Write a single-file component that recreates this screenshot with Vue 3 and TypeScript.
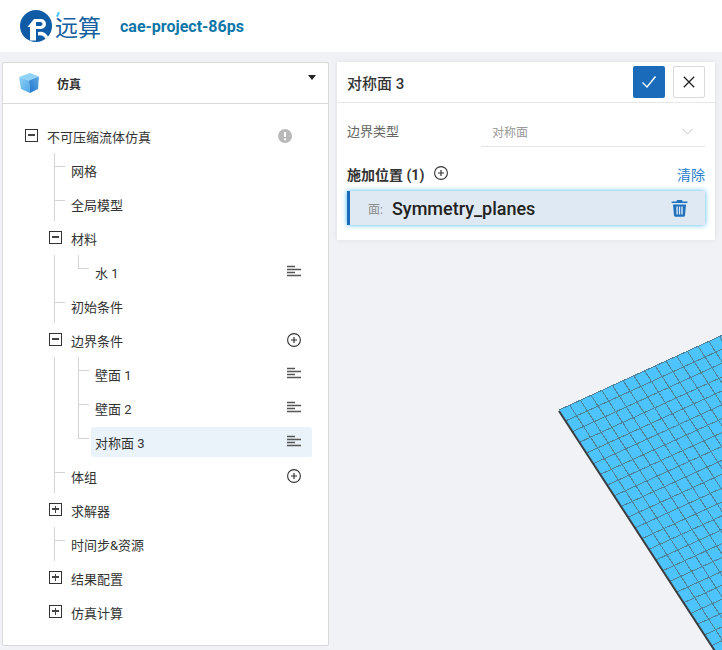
<script setup lang="ts">
import { computed } from "vue";

interface TreeRow
{
    label: string,
    level: number,
    toggle?: "open" | "closed",
    action?: "list" | "add" | "warn",
    stem?: boolean,
    branch?: "mid" | "last",
    active?: boolean,
}

const rows: TreeRow[] = [
    { label: "不可压缩流体仿真", level: 0, toggle: "open", action: "warn" },
    { label: "网格", level: 1, stem: true },
    { label: "全局模型", level: 1, stem: true },
    { label: "材料", level: 1, toggle: "open" },
    { label: "水 1", level: 2, stem: true, branch: "last", action: "list" },
    { label: "初始条件", level: 1, stem: true },
    { label: "边界条件", level: 1, toggle: "open", action: "add" },
    { label: "壁面 1", level: 2, stem: true, branch: "mid", action: "list" },
    { label: "壁面 2", level: 2, stem: true, branch: "mid", action: "list" },
    { label: "对称面 3", level: 2, stem: true, branch: "last", action: "list", active: true },
    { label: "体组", level: 1, stem: true, action: "add" },
    { label: "求解器", level: 1, toggle: "closed" },
    { label: "时间步&资源", level: 1, stem: true },
    { label: "结果配置", level: 1, toggle: "closed" },
    { label: "仿真计算", level: 1, toggle: "closed" },
];

// mesh plate, one corner plus one cell step along each edge
const corner = { x: 559, y: 410 };
const stepU = { x: 10.7, y: -4.9 };
const stepV = { x: 6.95, y: 10.7 };
const cells = 40;

const plate = computed((): string =>
{
    const far = (s: { x: number, y: number }) => `${corner.x + s.x * cells},${corner.y + s.y * cells}`;
    const both = `${corner.x + (stepU.x + stepV.x) * cells},${corner.y + (stepU.y + stepV.y) * cells}`;
    return `${corner.x},${corner.y} ${far(stepU)} ${both} ${far(stepV)}`;
});

const gridPath = computed((): string =>
{
    let d = "";
    for (let i = 0; i < cells; i++)
    {
        const ax = corner.x + stepU.x * i, ay = corner.y + stepU.y * i;
        if (i > 0) d += `M${ax} ${ay}L${ax + stepV.x * cells} ${ay + stepV.y * cells}`;
        const bx = corner.x + stepV.x * i, by = corner.y + stepV.y * i;
        d += `M${bx} ${by}L${bx + stepU.x * cells} ${by + stepU.y * cells}`;
    }
    return d;
});

const edgeEnd = { x: corner.x + stepV.x * cells, y: corner.y + stepV.y * cells };
</script>

<template>
    <div class="page">
        <header class="topbar">
            <svg class="logo-mark" width="34" height="34" viewBox="0 0 34 34">
                <circle cx="17" cy="17" r="16" fill="#0f5ba6" />
                <path d="M11 31.5 V18 H8.5 L15 10 H22 A5 5 0 0 1 22 20 H17 V31.5 Z" fill="#fff" />
                <path d="M17 13 H21.5 A2 2 0 0 1 21.5 17 H17 Z" fill="#0f5ba6" />
                <path d="M19 23 A9 9 0 0 1 29 27.5 L26.5 30 A6 6 0 0 0 19 26.5 Z" fill="#fff" />
            </svg>
            <span class="logo-text">远算</span>
            <span class="project">cae-project-86ps</span>
        </header>

        <main class="workspace">
            <svg class="mesh" width="722" height="650" viewBox="0 0 722 650">
                <polygon :points="plate" fill="#4dc4fd" />
                <path :d="gridPath" stroke="#4f8199" stroke-width="1" fill="none" shape-rendering="crispEdges" />
                <path :d="`M${corner.x} ${corner.y + 1}L${edgeEnd.x} ${edgeEnd.y + 1}`" stroke="#3a3d40" stroke-width="2" fill="none" />
            </svg>

            <section class="tree-panel">
                <div class="tree-head">
                    <svg class="cube" width="22" height="22" viewBox="0 0 22 22">
                        <defs>
                            <linearGradient id="cube-right" x1="0" y1="1" x2="1" y2="0">
                                <stop offset="0" stop-color="#1f74cc" />
                                <stop offset="1" stop-color="#5fa9e2" />
                            </linearGradient>
                            <linearGradient id="cube-left" x1="0" y1="0" x2="1" y2="1">
                                <stop offset="0" stop-color="#8ed2f6" />
                                <stop offset="1" stop-color="#4ba6e6" />
                            </linearGradient>
                        </defs>
                        <polygon points="12,1 21,4.5 11,8.5 1,5" fill="#8fd4f7" />
                        <polygon points="1,5 11,8.5 12,21 3,17" fill="url(#cube-left)" />
                        <polygon points="11,8.5 21,4.5 20,17 12,21" fill="url(#cube-right)" />
                    </svg>
                    <span class="tree-title">仿真</span>
                    <span class="caret"></span>
                </div>

                <ul class="tree">
                    <li
                        v-for="row in rows"
                        :key="row.label"
                        class="row"
                        :class="[`level-${row.level}`, { stem: row.stem }]"
                    >
                        <span v-if="row.branch" class="branch" :class="row.branch"></span>
                        <div class="row-inner" :class="{ active: row.active }">
                            <span v-if="row.toggle" class="toggle" :class="row.toggle"></span>
                            <span class="label">{{ row.label }}</span>
                            <svg v-if="row.action === 'list'" class="action" width="14" height="14" viewBox="0 0 14 14">
                                <path d="M0 1.5H8M0 4.5H14M0 7.5H8M0 10.5H14" stroke="#555" stroke-width="1.3" />
                            </svg>
                            <svg v-else-if="row.action === 'add'" class="action" width="14" height="14" viewBox="0 0 14 14">
                                <circle cx="7" cy="7" r="6.4" fill="none" stroke="#333" stroke-width="1.1" />
                                <path d="M7 4V10M4 7H10" stroke="#333" stroke-width="1.2" />
                            </svg>
                            <svg v-else-if="row.action === 'warn'" class="action warn" width="14" height="14" viewBox="0 0 14 14">
                                <circle cx="7" cy="7" r="7" fill="#b9b9b9" />
                                <path d="M7 3V8" stroke="#fff" stroke-width="2" />
                                <circle cx="7" cy="10.4" r="1.1" fill="#fff" />
                            </svg>
                        </div>
                    </li>
                </ul>
            </section>

            <section class="detail-panel">
                <div class="detail-head">
                    <span class="detail-title">对称面 3</span>
                    <button class="btn primary" type="button">
                        <svg width="16" height="14" viewBox="0 0 16 14">
                            <path d="M1.5 7.5L6 12L14.5 1.5" fill="none" stroke="#fff" stroke-width="1.4" />
                        </svg>
                    </button>
                    <button class="btn plain" type="button">
                        <svg width="12" height="12" viewBox="0 0 12 12">
                            <path d="M0.8 0.8L11.2 11.2M11.2 0.8L0.8 11.2" stroke="#222" stroke-width="1.3" />
                        </svg>
                    </button>
                </div>

                <div class="detail-body">
                    <div class="field">
                        <span class="field-label">边界类型</span>
                        <div class="select">
                            <span>对称面</span>
                            <svg width="11" height="7" viewBox="0 0 11 7">
                                <path d="M0.5 0.8L5.5 6L10.5 0.8" fill="none" stroke="#c4c4c4" stroke-width="1" />
                            </svg>
                        </div>
                    </div>

                    <div class="apply-head">
                        <span class="apply-title">施加位置 (1)</span>
                        <svg class="apply-add" width="14" height="14" viewBox="0 0 14 14">
                            <circle cx="7" cy="7" r="6.4" fill="none" stroke="#333" stroke-width="1.1" />
                            <path d="M7 4V10M4 7H10" stroke="#333" stroke-width="1.2" />
                        </svg>
                        <a class="clear">清除</a>
                    </div>

                    <div class="selected">
                        <span class="selected-kind">面:</span>
                        <span class="selected-name">Symmetry_planes</span>
                        <svg width="17" height="18" viewBox="0 0 17 18">
                            <path d="M6 1H11L11.6 2.4H16.4V4H0.6V2.4H5.4Z" fill="#1f70bd" />
                            <path d="M2 5.4H15L14 16.6A1.3 1.3 0 0 1 12.8 17.8H4.2A1.3 1.3 0 0 1 3 16.6ZM5.4 7.4V15.6H6.8V7.4ZM7.9 7.4V15.6H9.2V7.4ZM10.3 7.4V15.6H11.7V7.4Z" fill="#1f70bd" fill-rule="evenodd" />
                        </svg>
                    </div>
                </div>
            </section>
        </main>
    </div>
</template>

<style>
html, body
{
    margin: 0;
    overflow: hidden;
}
</style>

<style scoped>
.page
{
    width: 722px;
    height: 650px;
    display: flex;
    flex-direction: column;
    background-color: #f0f2f5;
    font-family: Roboto, "Noto Sans CJK SC", sans-serif;
    color: #333;
    overflow: hidden;
    position: relative;
}

.topbar
{
    height: 52px;
    flex: none;
    display: flex;
    align-items: center;
    padding-left: 19px;
    background-color: #fff;
}

.logo-mark
{
    flex: none;
}

.logo-text
{
    margin-left: 2px;
    font-family: "Noto Sans CJK SC", sans-serif;
    font-size: 23px;
    font-weight: 400;
    line-height: 30px;
    color: #14609f;
    position: relative;
}

.logo-text::before
{
    content: "";
    position: absolute;
    left: 2px;
    top: 1px;
    width: 2px;
    height: 5px;
    background-color: #4cc8f4;
    transform: rotate(25deg);
}

.project
{
    margin-left: 19px;
    font-size: 16px;
    font-weight: 700;
    color: #0f76a8;
}

.workspace
{
    flex: 1;
    display: flex;
    align-items: flex-start;
    gap: 8px;
    padding: 10px 7px 4px 2px;
    position: relative;
}

.mesh
{
    position: absolute;
    left: 0;
    top: -52px;
}

.tree-panel
{
    width: 327px;
    height: 584px;
    flex: none;
    box-sizing: border-box;
    border: 1px solid #d9d9d9;
    border-radius: 2px;
    background-color: #fff;
    position: relative;
}

.tree-head
{
    height: 41px;
    box-sizing: border-box;
    display: flex;
    align-items: center;
    padding-left: 15px;
    border-bottom: 1px solid #d9d9d9;
}

.tree-title
{
    margin-left: 17px;
    font-size: 12px;
    font-weight: 700;
    color: #333;
}

.caret
{
    margin-left: auto;
    margin-right: 12px;
    margin-bottom: 11px;
    border-left: 4px solid transparent;
    border-right: 4px solid transparent;
    border-top: 5px solid #222;
}

.tree
{
    list-style: none;
    margin: 0;
    padding: 15px 0 0;
}

.row
{
    height: 34px;
    position: relative;
}

.row-inner
{
    position: absolute;
    top: 2px;
    bottom: 2px;
    right: 16px;
    display: flex;
    align-items: center;
    padding-right: 11px;
    border-radius: 2px;
    font-size: 13px;
}

.level-0 .row-inner
{
    left: 21px;
}

.level-1 .row-inner
{
    left: 45px;
}

.level-2 .row-inner
{
    left: 88px;
    padding-left: 4px;
}

.row-inner.active
{
    background-color: #eaf3f9;
}

.row.stem::before
{
    content: "";
    position: absolute;
    left: 51px;
    top: 0;
    bottom: 0;
    width: 1px;
    background-color: #d4d4d4;
}

.level-1.stem::after
{
    content: "";
    position: absolute;
    left: 51px;
    top: 13px;
    width: 11px;
    height: 1px;
    background-color: #d4d4d4;
}

.branch
{
    position: absolute;
    left: 75px;
    top: 0;
    width: 11px;
    height: 14px;
    box-sizing: border-box;
    border-left: 1px solid #d4d4d4;
    border-bottom: 1px solid #d4d4d4;
}

.branch.mid::after
{
    content: "";
    position: absolute;
    left: -1px;
    top: 14px;
    width: 1px;
    height: 20px;
    background-color: #d4d4d4;
}

.toggle
{
    width: 13px;
    height: 13px;
    flex: none;
    box-sizing: border-box;
    border: 1px solid #333;
    margin-right: 9px;
    margin-left: 1px;
    margin-bottom: 1px;
    position: relative;
}

.toggle::before
{
    content: "";
    position: absolute;
    left: 2px;
    top: 4px;
    width: 7px;
    height: 1.5px;
    background-color: #444;
}

.toggle.closed::after
{
    content: "";
    position: absolute;
    left: 4.8px;
    top: 1.5px;
    width: 1.5px;
    height: 7px;
    background-color: #444;
}

.level-1 .label:first-child
{
    padding-left: 23px;
}

.action
{
    margin-left: auto;
    flex: none;
}

.action.warn
{
    margin-right: 9px;
}

.detail-panel
{
    width: 378px;
    flex: none;
    background-color: #fff;
    box-shadow: 0 0 6px rgba(0, 0, 0, 0.08);
    position: relative;
}

.detail-head
{
    height: 41px;
    box-sizing: border-box;
    display: flex;
    align-items: center;
    gap: 8px;
    padding: 0 10px;
    border-bottom: 1px solid #e4e6e9;
}

.detail-title
{
    margin-right: auto;
    font-size: 15px;
    font-weight: 500;
    color: #333;
}

.btn
{
    width: 32px;
    height: 32px;
    padding: 0;
    display: flex;
    align-items: center;
    justify-content: center;
    border-radius: 2px;
}

.btn.primary
{
    background-color: #1a6cba;
    border: none;
}

.btn.plain
{
    background-color: #fff;
    border: 1px solid #d9d9d9;
}

.detail-body
{
    padding: 14px 10px 15px;
}

.field
{
    display: flex;
    height: 30px;
}

.field-label
{
    width: 134px;
    font-size: 13px;
    line-height: 30px;
    color: #666;
}

.select
{
    flex: 1;
    display: flex;
    align-items: center;
    justify-content: space-between;
    padding: 0 12px 0 11px;
    border-bottom: 1px solid #e2e4e7;
    font-size: 12px;
    color: #999;
}

.apply-head
{
    margin-top: 15px;
    height: 24px;
    display: flex;
    align-items: center;
}

.apply-title
{
    font-size: 14px;
    font-weight: 700;
    color: #333;
}

.apply-add
{
    margin-left: 10px;
    margin-bottom: 2px;
}

.clear
{
    margin-left: auto;
    font-size: 14px;
    color: #2a80cc;
}

.selected
{
    margin-top: 5px;
    height: 34px;
    box-sizing: border-box;
    display: flex;
    align-items: center;
    padding: 0 17px 0 18px;
    background-color: #dfe9f3;
    border-left: 3px solid #1a6cba;
    box-shadow: 0 0 5px #4ab8f0;
}

.selected-kind
{
    font-size: 12px;
    color: #8c8c8c;
}

.selected-name
{
    margin-left: 9px;
    margin-right: auto;
    font-size: 18px;
    font-weight: 500;
    color: #222;
}
</style>
